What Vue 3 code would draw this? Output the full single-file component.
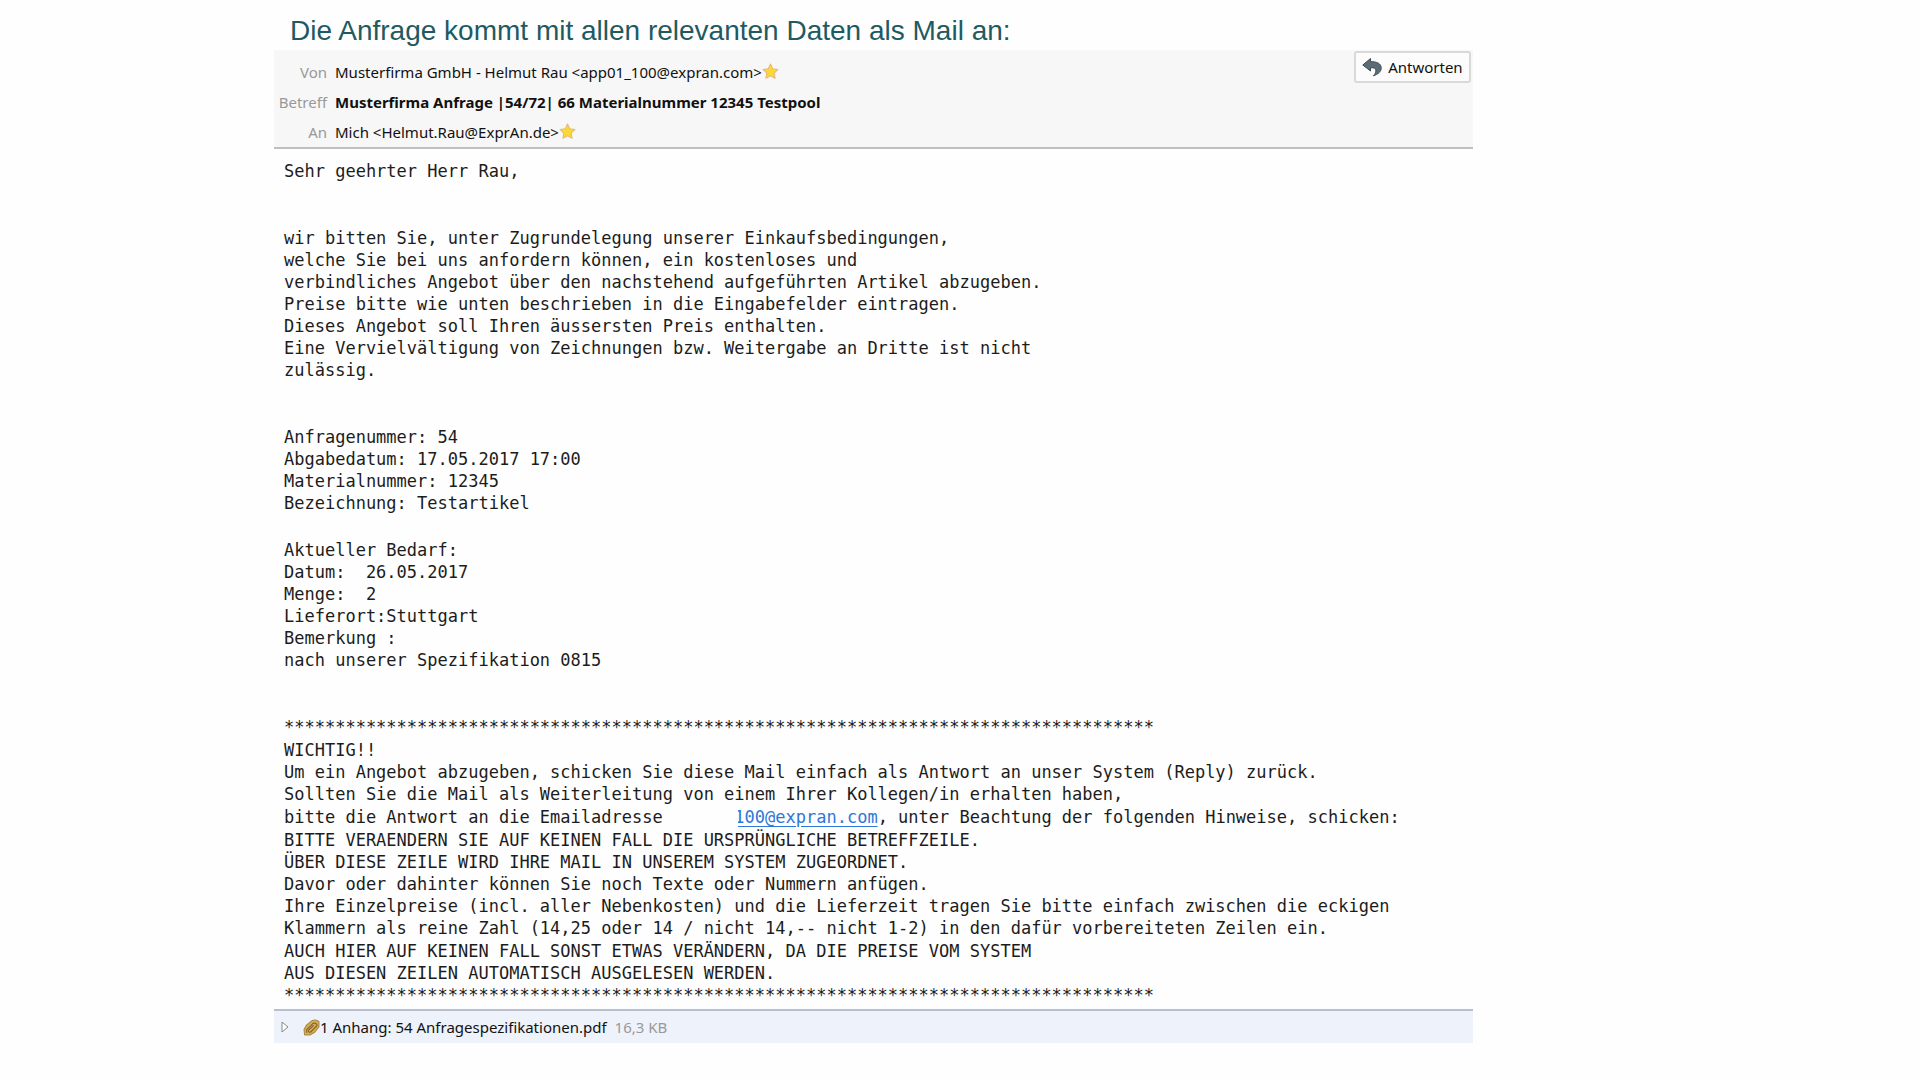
<script setup>
const stars = '*'.repeat(85)
const intro = [
  'wir bitten Sie, unter Zugrundelegung unserer Einkaufsbedingungen,',
  'welche Sie bei uns anfordern können, ein kostenloses und',
  'verbindliches Angebot über den nachstehend aufgeführten Artikel abzugeben.',
  'Preise bitte wie unten beschrieben in die Eingabefelder eintragen.',
  'Dieses Angebot soll Ihren äussersten Preis enthalten.',
  'Eine Vervielvältigung von Zeichnungen bzw. Weitergabe an Dritte ist nicht',
  'zulässig.'
].join('\n')
const request = [
  'Anfragenummer: 54',
  'Abgabedatum: 17.05.2017 17:00',
  'Materialnummer: 12345',
  'Bezeichnung: Testartikel'
].join('\n')
const demand = [
  'Aktueller Bedarf:',
  'Datum:  26.05.2017',
  'Menge:  2',
  'Lieferort:Stuttgart',
  'Bemerkung :',
  'nach unserer Spezifikation 0815'
].join('\n')
const howTo = [
  'WICHTIG!!',
  'Um ein Angebot abzugeben, schicken Sie diese Mail einfach als Antwort an unser System (Reply) zurück.',
  'Sollten Sie die Mail als Weiterleitung von einem Ihrer Kollegen/in erhalten haben,'
].join('\n')
const rules = [
  'BITTE VERAENDERN SIE AUF KEINEN FALL DIE URSPRÜNGLICHE BETREFFZEILE.',
  'ÜBER DIESE ZEILE WIRD IHRE MAIL IN UNSEREM SYSTEM ZUGEORDNET.',
  'Davor oder dahinter können Sie noch Texte oder Nummern anfügen.',
  'Ihre Einzelpreise (incl. aller Nebenkosten) und die Lieferzeit tragen Sie bitte einfach zwischen die eckigen',
  'Klammern als reine Zahl (14,25 oder 14 / nicht 14,-- nicht 1-2) in den dafür vorbereiteten Zeilen ein.'
].join('\n')
const priceRule = [
  'AUCH HIER AUF KEINEN FALL SONST ETWAS VERÄNDERN, DA DIE PREISE VOM SYSTEM',
  'AUS DIESEN ZEILEN AUTOMATISCH AUSGELESEN WERDEN.'
].join('\n')
const starPath = 'M8 1l2.1 4.4 4.9.7-3.5 3.4.8 4.9L8 12.1l-4.3 2.3.8-4.9L1 6.1l4.9-.7z'
</script>

<template>
  <main class="page">
    <h1>Die Anfrage kommt mit allen relevanten Daten als Mail an:</h1>
    <article class="mail">
      <header class="head">
        <dl class="fields">
          <dt>Von</dt>
          <dd>
            Musterfirma GmbH - Helmut Rau &lt;app01_100@expran.com&gt;<svg class="star" viewBox="0 0 16 16" aria-hidden="true"><path :d="starPath" /></svg>
          </dd>
          <dt>Betreff</dt>
          <dd class="subject">Musterfirma Anfrage |54/72| 66 Materialnummer 12345 Testpool</dd>
          <dt>An</dt>
          <dd>
            Mich &lt;Helmut.Rau@ExprAn.de&gt;<svg class="star" viewBox="0 0 16 16" aria-hidden="true"><path :d="starPath" /></svg>
          </dd>
        </dl>
        <button type="button" class="reply">
          <svg viewBox="0 0 20 20" aria-hidden="true">
            <path d="M8.500 1.500L.8 8l7.700 6v-3.200c3.600-.3 5.400.5 5.400 3 0 1.900-.9 3.200-2.500 5 4.700-1.500 7.800-4.200 7.800-7.700 0-4.500-4.200-6.600-10.700-6.400z" />
          </svg>
          Antworten
        </button>
      </header>

      <section class="body">
        <p>Sehr geehrter Herr Rau,</p>
        <p class="far">{{ intro }}</p>
        <p class="far">{{ request }}</p>
        <p class="near">{{ demand }}</p>
        <p class="far">{{ stars }}</p>
        <p>{{ howTo }}</p>
        <p>bitte die Antwort an die Emailadresse{{ ' '.repeat(7) }}<a href="mailto:100@expran.com">100@expran.com</a>, unter Beachtung der folgenden Hinweise, schicken:</p>
        <p>{{ rules }}</p>
        <p>{{ priceRule }}</p>
        <p class="closing">{{ stars }}</p>
      </section>

      <footer class="attachment">
        <svg class="toggle" viewBox="0 0 8 12" aria-hidden="true"><path d="M1 1l6 5-6 5z" /></svg>
        <svg class="clip" viewBox="0 0 16 16" aria-hidden="true">
          <path class="clip-base" d="M1 10L3.500 5.500 8.500 1.500q4-1.500 6.500 1v5L11 12.500l-4.500 2.500H1.500z" />
          <path class="clip-wire" d="M3.500 13L3.500 10 9 4.500q2-1.500 3.500 0t-.5 3L7.500 12q-1.500 1-2.200 0t.4-2L10 6" />
        </svg>
        <span>1 Anhang: 54 Anfragespezifikationen.pdf</span>
        <span class="size">16,3 KB</span>
      </footer>
    </article>
  </main>
</template>

<style>
body {
  margin: 0;
  background: #fefefe;
}
</style>

<style scoped>
.page {
  box-sizing: border-box;
  padding: 12px 23.3% 36px 274px;
  color: #111;
  font-family: "Noto Sans", "Open Sans", sans-serif;
}
h1 {
  margin: 0;
  padding-left: 16px;
  font: 400 28px/38px "Liberation Sans", Arial, sans-serif;
  color: #1f5a63;
  white-space: nowrap;
}
.head {
  display: flex;
  justify-content: space-between;
  align-items: flex-start;
  background: #f7f7f7;
  border-bottom: 2px solid #c0c0c0;
  font-size: 15px;
}
.fields {
  display: grid;
  grid-template-columns: 53px auto;
  grid-auto-rows: 30px;
  column-gap: 8px;
  margin: 0;
  padding: 7px 0 0;
  line-height: 30px;
  white-space: nowrap;
}
dt {
  color: #999;
  text-align: right;
}
dd {
  display: flex;
  align-items: center;
  margin: 0;
}
.subject {
  font-weight: 700;
}
.star {
  width: 17px;
  height: 17px;
  margin-bottom: 2px;
  fill: #fbd935;
  stroke: #e8b878;
  stroke-linejoin: round;
}
.reply {
  display: flex;
  align-items: center;
  gap: 6px;
  height: 32px;
  margin: 1px 2px 0 0;
  padding: 0 6px;
  border: 2px solid #d9d9d9;
  border-radius: 3px;
  background: #fcfcfc;
  color: #111;
  font: inherit;
}
.reply svg {
  width: 20px;
  height: 20px;
  fill: #5c6c76;
  stroke: #3c4a52;
}
.body {
  display: flex;
  flex-direction: column;
  gap: 1px;
  padding: 11px 10px 0;
  font: 400 17px/22px "DejaVu Sans Mono", "Liberation Mono", monospace;
  color: #1c1c1c;
}
.body p {
  margin: 0;
  white-space: pre;
}
.body .far {
  margin-top: 44px;
}
.body .near {
  margin-top: 24px;
}
.body .closing {
  margin-top: -1px;
}
.body a {
  position: relative;
  color: #2f78d8;
  text-decoration: underline;
  text-underline-offset: 3px;
}
.body a::before {
  content: "";
  position: absolute;
  inset: 0 auto 0 0;
  width: 4px;
  background: #fefefe;
}
.attachment {
  display: flex;
  align-items: center;
  height: 32px;
  margin-top: 3px;
  padding-left: 7px;
  border-top: 2px solid #b9bfce;
  background: #eef2fa;
  font-size: 15px;
  white-space: nowrap;
}
.toggle {
  width: 8px;
  height: 12px;
  margin-right: 14px;
  fill: #fff;
  stroke: #888;
}
.clip {
  width: 17px;
  height: 17px;
}
.clip-base {
  fill: #d6ad57;
  stroke: #a9873f;
  stroke-linejoin: round;
}
.clip-wire {
  fill: none;
  stroke: #7d5f28;
}
.size {
  margin-left: 8px;
  color: #999;
}
</style>
